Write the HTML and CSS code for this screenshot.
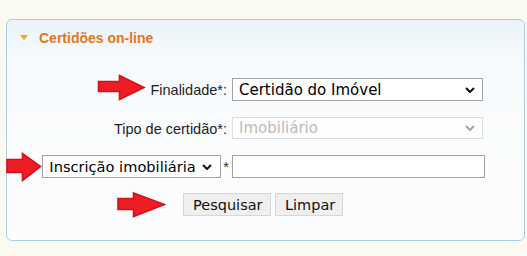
FILE: index.html
```html
<!DOCTYPE html>
<html lang="pt">
<head>
<meta charset="utf-8">
<title>Certidões on-line</title>
<link rel="stylesheet" href="styles.css">
</head>
<body>
<div class="panel">
  <div class="header">
    <span class="tri"></span>
    <span class="title">Certidões on-line</span>
  </div>
  <form class="form">
    <div class="row">
      <div class="lab">
        <svg class="arrow a1" width="49" height="27" viewBox="0 0 49 27"><path d="M1.5 7.5H22.5V1.5L47 13.5L22.5 25.5V17.5H1.5Z"/></svg>
        <label class="text">Finalidade*:</label>
      </div>
      <div class="sel w250">
        <select class="field"><option>Certidão do Imóvel</option></select>
        <svg class="chev" width="10" height="6" viewBox="0 0 10 6"><path d="M1 1L5 5L9 1"/></svg>
      </div>
    </div>
    <div class="row r2">
      <div class="lab">
        <label class="text">Tipo de certidão*:</label>
      </div>
      <div class="sel w250 dis">
        <select class="field" disabled><option>Imobiliário</option></select>
        <svg class="chev" width="10" height="6" viewBox="0 0 10 6"><path d="M1 1L5 5L9 1"/></svg>
      </div>
    </div>
    <div class="row r3">
      <div class="lab tight">
        <svg class="arrow a3" width="36" height="30" viewBox="0 0 36 30"><path d="M1 7.5H16.5V1.5L34.5 14.5L16.5 28.5V20.5H1Z"/></svg>
        <div class="sel w179">
          <select class="field small"><option>Inscrição imobiliária</option></select>
          <svg class="chev c2" width="10" height="6" viewBox="0 0 10 6"><path d="M1 1L5 5L9 1"/></svg>
        </div>
        <span class="star">*</span>
      </div>
      <input class="input" type="text">
    </div>
    <div class="row r4">
      <svg class="arrow a4" width="49" height="26" viewBox="0 0 49 26"><path d="M1 6.5H16.5V1L47.5 12.5L16.5 24.5V17.5H1Z"/></svg>
      <button type="button" class="btn b1">Pesquisar</button>
      <button type="button" class="btn">Limpar</button>
    </div>
  </form>
</div>
</body>
</html>
```
FILE: styles.css
```css
html, body {
  margin: 0;
  padding: 0;
  background: #fbfaf1;
}
body {
  font-family: "Liberation Sans", Arial, sans-serif;
  width: 527px;
  height: 256px;
  overflow: hidden;
}
.panel {
  box-sizing: border-box;
  margin: 19px 0 0 6px;
  width: 519px;
  height: 222px;
  border: 1px solid #a9cdea;
  border-radius: 6px;
  background: linear-gradient(#ebf3f8 0px, #f8fbfd 45px, #fcfdfd 100%);
}
.header {
  display: flex;
  align-items: center;
  padding: 10px 0 0 13px;
  height: 16px;
}
.tri {
  width: 0;
  height: 0;
  border-left: 4.5px solid transparent;
  border-right: 4.5px solid transparent;
  border-top: 5px solid #f2a60c;
  margin-right: 11px;
  margin-top: -1px;
}
.title {
  font-size: 14px;
  line-height: 16px;
  font-weight: bold;
  color: #e47619;
}
.form {
  padding-top: 32px;
  margin: 0;
}
.row {
  display: flex;
  align-items: center;
  height: 23px;
}
.r2 { margin-top: 16px; }
.r3 { margin-top: 15px; }
.r4 { margin-top: 15px; padding-left: 110px; }
.lab {
  width: 220px;
  display: flex;
  align-items: center;
  justify-content: flex-end;
  padding-right: 5px;
  height: 23px;
}
.lab.tight {
  padding-right: 3px;
  width: 222px;
}
.text {
  font-size: 14.5px;
  color: #1e1e1e;
}
.arrow path {
  fill: #ee1c24;
  stroke: #d41119;
  stroke-width: 1.6;
  stroke-linejoin: miter;
}
.a1 { margin-right: 4px; margin-top: -4px; }
.a3 { margin-right: 0; flex: none; }
.a4 { margin-right: 17px; }
.sel {
  position: relative;
  height: 23px;
  flex: none;
}
.w250 { width: 251px; }
.w179 { width: 179px; }
.field {
  -webkit-appearance: none;
  appearance: none;
  box-sizing: border-box;
  width: 100%;
  height: 23px;
  margin: 0;
  border: 1px solid #a2a2a2;
  border-radius: 0;
  background: #fff;
  font-family: "DejaVu Sans", Verdana, sans-serif;
  font-size: 15px;
  color: #000;
  padding: 0 0 0 6px;
  outline: none;
}
.field.small {
  font-size: 14.6px;
}
.dis .field {
  border-color: #cfcfcf;
  color: #9f9f9f;
  background: #fff;
  height: 22px;
}
.chev {
  position: absolute;
  right: 8px;
  top: 9px;
  pointer-events: none;
}
.chev path {
  fill: none;
  stroke: #111;
  stroke-width: 2;
}
.dis .chev { top: 8px; }
.dis .chev path { stroke: #a5a5a5; }
.c2 { right: 9px; }
.star {
  font-size: 14.5px;
  color: #333;
  margin-left: 2px;
  width: 6px;
  align-self: center;
}
.input {
  box-sizing: border-box;
  width: 253px;
  height: 23px;
  margin: 0;
  border: 1px solid #a2a2a2;
  background: #fff;
  padding: 0 4px;
  font-family: "DejaVu Sans", Verdana, sans-serif;
  font-size: 14px;
  outline: none;
}
.btn {
  box-sizing: border-box;
  height: 23px;
  margin: 0;
  padding: 0 9px;
  border: 1px solid #d6d6d6;
  border-radius: 0;
  background: #efefef;
  font-family: "DejaVu Sans", Verdana, sans-serif;
  font-size: 14.5px;
  color: #111;
}
.b1 { width: 88px; margin-right: 4px; }
.btn + .btn { width: 68px; }
```
